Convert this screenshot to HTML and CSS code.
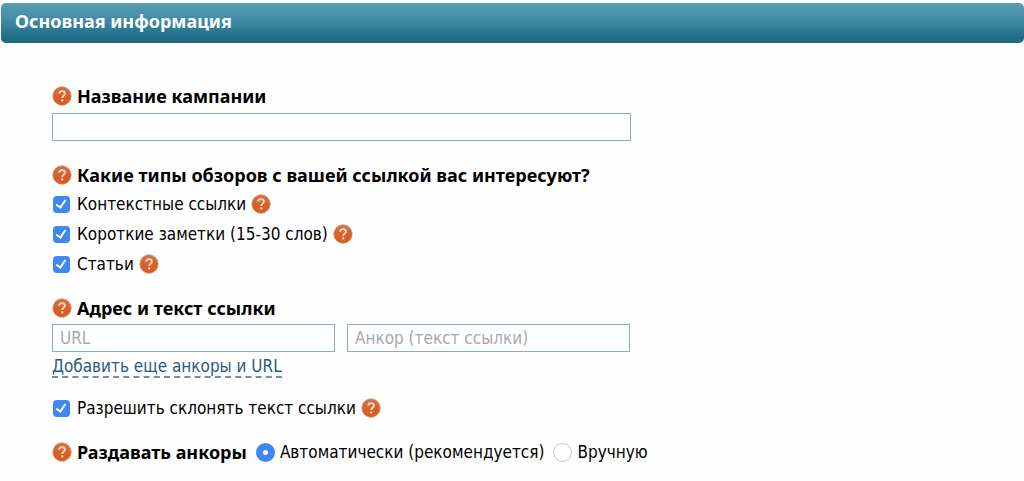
FILE: index.html
```html
<!DOCTYPE html>
<html lang="ru">
<head>
	<title>Основная информация</title>

	<meta charset="UTF-8">
	<meta name="viewport" content="width=device-width, initial-scale=1">

	<link rel="stylesheet" href="styles.css">
</head>
<body>
	<!-- help icon, reused next to the labels -->
	<svg class="sprite" width="0" height="0" aria-hidden="true">
		<defs>
			<linearGradient id="help-fill" x1="0" y1="0" x2="0" y2="1">
				<stop offset="0" stop-color="#cf7748"/>
				<stop offset="0.5" stop-color="#d4622c"/>
				<stop offset="1" stop-color="#dc5a1c"/>
			</linearGradient>
		</defs>
		<symbol id="help" viewBox="0 0 20 20">
			<circle cx="10" cy="10" r="9.2" fill="url(#help-fill)" stroke="#d08a66" stroke-width="0.7"/>
			<path d="M7.2 7.8C7.2 6 8.4 5.2 10 5.2c1.7 0 2.9 1 2.9 2.4 0 2.1-2.7 2.2-2.7 4.3" fill="none" stroke="#f8d8c4" stroke-width="1.8"/>
			<circle cx="10.2" cy="14.4" r="1.2" fill="#f8d8c4"/>
		</symbol>
	</svg>

	<h1 class="header">Основная информация</h1>

	<form class="form">
		<div class="group">
			<div class="title">
				<svg class="help"><use href="#help"/></svg>
				<label for="name">Название кампании</label>
			</div>
			<input type="text" id="name" class="field field-wide">
		</div>

		<div class="group">
			<h2 class="title">
				<svg class="help"><use href="#help"/></svg>
				<span>Какие типы обзоров с вашей ссылкой вас интересуют?</span>
			</h2>
			<div class="types">
				<div class="row">
					<input type="checkbox" id="context" class="check" checked>
					<label for="context">Контекстные ссылки</label>
					<svg class="help"><use href="#help"/></svg>
				</div>
				<div class="row">
					<input type="checkbox" id="notes" class="check" checked>
					<label for="notes">Короткие заметки (15-30 слов)</label>
					<svg class="help"><use href="#help"/></svg>
				</div>
				<div class="row">
					<input type="checkbox" id="articles" class="check" checked>
					<label for="articles">Статьи</label>
					<svg class="help"><use href="#help"/></svg>
				</div>
			</div>
		</div>

		<div class="group">
			<h2 class="title">
				<svg class="help"><use href="#help"/></svg>
				<span>Адрес и текст ссылки</span>
			</h2>
			<div class="fields">
				<input type="text" class="field" placeholder="URL" aria-label="URL">
				<input type="text" class="field" placeholder="Анкор (текст ссылки)" aria-label="Анкор (текст ссылки)">
			</div>
			<a href="#" class="add">Добавить еще анкоры и URL</a>
		</div>

		<div class="group row">
			<input type="checkbox" id="decline" class="check" checked>
			<label for="decline">Разрешить склонять текст ссылки</label>
			<svg class="help"><use href="#help"/></svg>
		</div>

		<div class="row" role="radiogroup" aria-labelledby="mode">
			<h2 class="title" id="mode">
				<svg class="help"><use href="#help"/></svg>
				<span>Раздавать анкоры</span>
			</h2>
			<div class="option">
				<input type="radio" id="auto" name="mode" class="radio" checked>
				<label for="auto">Автоматически (рекомендуется)</label>
			</div>
			<div class="option">
				<input type="radio" id="manual" name="mode" class="radio">
				<label for="manual">Вручную</label>
			</div>
		</div>
	</form>
</body>
</html>
```

FILE: styles.css
```css
* {
	margin: 0;
	padding: 0;
	box-sizing: border-box;
}

body {
	background: #fefefe;
	color: #000;
	font-family: Tahoma, "DejaVu Sans Condensed", sans-serif;
	font-size: 17px;
	line-height: 24px;
}

.sprite {
	position: absolute;
}

.header,
.title {
	font-family: Tahoma, "Noto Sans", sans-serif;
	font-size: 18px;
	font-weight: bold;
	line-height: 24px;
}

.header {
	margin: 3px 0 0 1px;
	padding: 6px 14px 10px;
	border-radius: 5px;
	background: linear-gradient(#5a9db3, #4590a8 35%, #1f6b87 88%, #236a82);
	color: #fff;
}

.form {
	padding: 41px 52px 14px;
}

.group {
	margin-bottom: 14px;
}

.group:first-child {
	margin-bottom: 22px;
}

.group:nth-child(2) {
	margin-bottom: 17px;
}

.title {
	display: flex;
	align-items: center;
	gap: 5px;
}

.help {
	width: 20px;
	height: 20px;
	flex: none;
}

.field {
	width: 283px;
	max-width: 100%;
	height: 28px;
	padding: 0 7px;
	border: 1px solid #8fabbb;
	background: #fff;
	font: inherit;
}

.field::placeholder {
	color: #a9a9a9;
	opacity: 1;
}

.field-wide {
	display: block;
	width: 579px;
	margin-top: 5px;
}

.types {
	margin-top: 2px;
}

.fields {
	display: flex;
	flex-wrap: wrap;
	gap: 12px;
	margin-top: 4px;
}

.add {
	display: inline-block;
	margin: 4px 0 1px;
	border-bottom: 2px dashed #6a93b0;
	color: #2f5a80;
	line-height: 20px;
	text-decoration: none;
}

.row {
	display: flex;
	flex-wrap: wrap;
	align-items: center;
	gap: 5px;
	min-height: 30px;
}

.check,
.radio {
	flex: none;
	appearance: none;
	background: #3f87f5;
}

.check {
	position: relative;
	width: 17px;
	height: 17px;
	margin: 0 2px 0 1px;
	border-radius: 4px;
}

/* tick */
.check:checked::after {
	content: "";
	position: absolute;
	left: 5px;
	top: 2px;
	width: 4px;
	height: 8px;
	border: solid #fff;
	border-width: 0 2px 2px 0;
	transform: rotate(35deg);
}

.option {
	display: flex;
	align-items: center;
	gap: 5px;
	margin-left: 4px;
}

.radio {
	width: 19px;
	height: 19px;
	border: 1px solid #c3c3c3;
	border-radius: 50%;
	background: #fff;
}

.radio:checked {
	border: 7px solid #3f87f5;
}
```
